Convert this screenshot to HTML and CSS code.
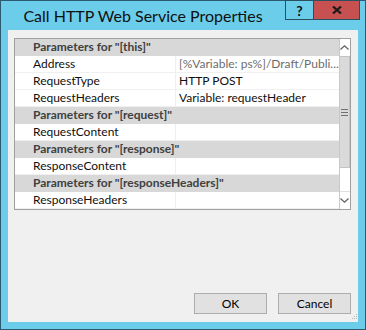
FILE: index.html
```html
<!DOCTYPE html>
<html lang="en">
<head>
  <meta charset="UTF-8" />
  <title>Call HTTP Web Service Properties</title>
  <link rel="stylesheet" href="styles.css">
</head>
<body>
  <div class="window">
    <div class="titlebar">
      <div class="title">Call HTTP Web Service Properties</div>
      <div class="caption-btn help">?</div>
      <div class="caption-btn close">
        <svg width="10" height="8" viewBox="0 0 10 8">
          <path d="M1 0.5 L9 7.5 M9 0.5 L1 7.5" stroke="#1a1a1a" stroke-width="2.2" fill="none"/>
        </svg>
      </div>
    </div>

    <div class="client">
      <div class="grid">
        <div class="rows">
          <div class="group">Parameters for "[this]"</div>
          <div class="prop"><span class="name">Address</span><span class="value muted">[%Variable: ps%]/Draft/Publi...</span></div>
          <div class="prop"><span class="name">RequestType</span><span class="value">HTTP POST</span></div>
          <div class="prop"><span class="name">RequestHeaders</span><span class="value">Variable: requestHeader</span></div>
          <div class="group">Parameters for "[request]"</div>
          <div class="prop"><span class="name">RequestContent</span><span class="value"></span></div>
          <div class="group">Parameters for "[response]"</div>
          <div class="prop"><span class="name">ResponseContent</span><span class="value"></span></div>
          <div class="group">Parameters for "[responseHeaders]"</div>
          <div class="prop"><span class="name">ResponseHeaders</span><span class="value"></span></div>
        </div>
        <div class="scrollbar">
          <div class="arrow">
            <svg width="9" height="5" viewBox="0 0 9 5"><path d="M0.5 4.5 L4.5 0.8 L8.5 4.5" stroke="#606060" stroke-width="1.2" fill="none"/></svg>
          </div>
          <div class="thumb">
            <div class="grip"></div>
          </div>
          <div class="track"></div>
          <div class="arrow">
            <svg width="9" height="5" viewBox="0 0 9 5"><path d="M0.5 0.5 L4.5 4.2 L8.5 0.5" stroke="#606060" stroke-width="1.2" fill="none"/></svg>
          </div>
        </div>
      </div>

      <div class="buttons">
        <button>OK</button>
        <button>Cancel</button>
      </div>

      <svg class="sizegrip" width="7" height="7" viewBox="0 0 7 7">
        <rect x="5" y="0" width="1" height="1" fill="#b8b8b8"/>
        <rect x="3" y="2" width="1" height="1" fill="#b8b8b8"/>
        <rect x="5" y="2" width="1" height="1" fill="#b8b8b8"/>
        <rect x="1" y="4" width="1" height="1" fill="#b8b8b8"/>
        <rect x="3" y="4" width="1" height="1" fill="#b8b8b8"/>
        <rect x="5" y="4" width="1" height="1" fill="#b8b8b8"/>
      </svg>
    </div>
  </div>
</body>
</html>
```

FILE: styles.css
```css
body {
  margin: 0;
  font-family: Lato, "Open Sans", sans-serif;
  background: #ffffff;
}

.window {
  width: 366px;
  height: 330px;
  box-sizing: border-box;
  border: 1px solid #2c5a70;
  background: #6bcdea;
  display: flex;
  flex-direction: column;
}

.titlebar {
  height: 29px;
  display: flex;
  align-items: flex-start;
  padding-right: 5px;
}

.title {
  flex: 1;
  text-align: center;
  font-size: 16px;
  line-height: 30px;
  color: #101010;
}

.caption-btn {
  margin-top: -1px;
  height: 20px;
  box-sizing: border-box;
  border: 1px solid #2a4f60;
  display: flex;
  align-items: center;
  justify-content: center;
}

.help {
  width: 28px;
  border-right: none;
  font-weight: bold;
  font-size: 14px;
  color: #111;
}

.close {
  width: 47px;
  background: #c75050;
}

.client {
  flex: 1;
  margin: 0 7px 7px 7px;
  background: #f0f0f0;
  padding: 8px 7px 8px 6px;
  display: flex;
  flex-direction: column;
  position: relative;
}

.grid {
  width: 337px;
  height: 172px;
  box-sizing: border-box;
  border: 1px solid #a0a0a0;
  background: #ffffff;
  display: flex;
}

.rows {
  flex: 1;
  font-size: 12px;
}

.group,
.prop {
  height: 17px;
  line-height: 16px;
  box-sizing: border-box;
  padding-left: 18px;
  white-space: nowrap;
  overflow: hidden;
}

.group {
  background: #d8d8d8;
  font-weight: bold;
  color: #404040;
}

.prop {
  display: flex;
  border-bottom: 1px solid #f0f0f0;
  color: #101010;
}

.name {
  width: 142px;
  border-right: 1px solid #efefef;
}

.value {
  flex: 1;
  padding-left: 3px;
  overflow: hidden;
}

.muted {
  color: #6d6d6d;
}

.scrollbar {
  width: 17px;
  box-sizing: border-box;
  border-left: 1px solid #c8c8c8;
  display: flex;
  flex-direction: column;
}

.arrow {
  height: 17px;
  display: flex;
  align-items: center;
  justify-content: center;
  background: #ffffff;
}

.thumb {
  height: 112px;
  box-sizing: border-box;
  background: #dadada;
  border: 1px solid #c4c4c4;
  border-left: none;
  display: flex;
  align-items: center;
  justify-content: center;
}

.grip {
  width: 7px;
  height: 5px;
  border-top: 1px solid #707070;
  border-bottom: 1px solid #707070;
  position: relative;
}

.grip::after {
  content: "";
  position: absolute;
  left: 0;
  right: 0;
  top: 2px;
  border-top: 1px solid #707070;
}

.track {
  flex: 1;
  background: #ffffff;
  border-bottom: 1px solid #e0e0e0;
}

.buttons {
  margin-top: auto;
  display: flex;
  justify-content: flex-end;
  gap: 11px;
}

button {
  width: 73px;
  height: 21px;
  box-sizing: border-box;
  border: 1px solid #adadad;
  background: #e1e1e1;
  font-family: inherit;
  font-size: 12px;
  color: #000;
  padding: 0;
}

.sizegrip {
  position: absolute;
  right: 0;
  bottom: 1px;
}
```
